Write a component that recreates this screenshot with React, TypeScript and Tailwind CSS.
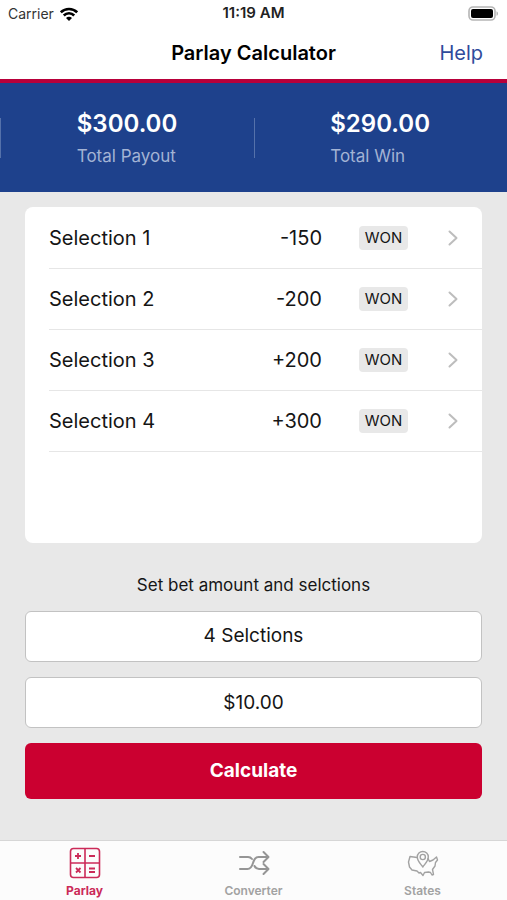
import { useState } from "react";
import type { ReactNode } from "react";

type Selection = {
  name: string;
  odds: string;
  result: string;
};

const selections: Selection[] = [
  { name: "Selection 1", odds: "-150", result: "WON" },
  { name: "Selection 2", odds: "-200", result: "WON" },
  { name: "Selection 3", odds: "+200", result: "WON" },
  { name: "Selection 4", odds: "+300", result: "WON" },
];

export default function App() {
  const [count, setCount] = useState("4");
  const [bet, setBet] = useState("$10.00");

  return (
    <div className="flex min-h-screen flex-col bg-[#e8e8e8] font-['Inter',sans-serif] text-[#151515]">
      <StatusBar />
      <header className="box-content grid h-13 grid-cols-[1fr_auto_1fr] items-center border-b-4 border-[#b8003a] bg-white">
        <h1 className="col-start-2 text-xl font-semibold text-black">Parlay Calculator</h1>
        <a href="#help" className="justify-self-end pr-6 text-xl text-[#2f4b9c]">
          Help
        </a>
      </header>

      <section className="flex h-[109px] items-center bg-[#1e418c]">
        <Stat value="$300.00" label="Total Payout" />
        <Stat value="$290.00" label="Total Win" />
      </section>

      <main className="flex flex-1 flex-col px-[25px] pt-[15px]">
        <ul className="min-h-[336px] overflow-hidden rounded-lg bg-white pt-px">
          {selections.map((selection) => (
            <SelectionRow key={selection.name} selection={selection} />
          ))}
        </ul>

        <form onSubmit={(event) => event.preventDefault()}>
          <p className="mt-7 text-center text-[17px] leading-7">Set bet amount and selctions</p>
          <select
            aria-label="Number of selections"
            value={count}
            onChange={(event) => setCount(event.target.value)}
            className="mt-3 block h-[51px] w-full appearance-none rounded-md border border-[#c2c2c2] bg-white text-[19px] [text-align-last:center]"
          >
            <option value="2">2 Selctions</option>
            <option value="3">3 Selctions</option>
            <option value="4">4 Selctions</option>
          </select>
          <input
            type="text"
            aria-label="Bet amount"
            value={bet}
            onChange={(event) => setBet(event.target.value)}
            className="mt-[15px] block h-[51px] w-full rounded-md border border-[#c2c2c2] bg-white text-center text-[19px]"
          />
          <button
            type="submit"
            className="mt-[15px] block h-14 w-full rounded-md bg-[#cb0030] text-[19px] font-bold text-white"
          >
            Calculate
          </button>
        </form>
      </main>

      <nav className="grid h-[60px] grid-cols-3 border-t border-[#d6d6d6] bg-[#fcfcfc]">
        <Tab label="Parlay" icon={<ParlayIcon />} active />
        <Tab label="Converter" icon={<ConverterIcon />} />
        <Tab label="States" icon={<StatesIcon />} />
      </nav>
    </div>
  );
}

function StatusBar() {
  return (
    <div className="grid h-[27px] grid-cols-[1fr_auto_1fr] items-center bg-white px-2">
      <div className="flex items-center gap-1.5 text-sm text-[#333]">
        <span>Carrier</span>
        <svg viewBox="0 0 18 14" className="h-3.5 w-[18px]" fill="none" stroke="#000" strokeWidth="2.6">
          <path d="M.8 5.400a11.500 11.500 0 0 1 16.400 0" />
          <path d="M3.800 8.500a7.300 7.300 0 0 1 10.400 0" />
          <path d="M9 14 6 11a4.200 4.200 0 0 1 6 0Z" fill="#000" stroke="none" />
        </svg>
      </div>
      <span className="text-[15px] font-semibold text-[#222]">11:19 AM</span>
      <svg viewBox="0 0 31 15" className="h-[15px] w-[31px] justify-self-end">
        <rect x="1" y="1" width="26" height="13" rx="4" fill="#fff" stroke="#b5b5b5" strokeWidth="1.6" />
        <rect x="3" y="3" width="22" height="9" rx="2" fill="#000" />
        <path d="M28.5 5.2c2 .8 2 3.8 0 4.6Z" fill="#b5b5b5" />
      </svg>
    </div>
  );
}

function Stat({ value, label }: { value: string; label: string }) {
  return (
    <div className="flex flex-1 basis-0 items-center">
      <span className="h-10 w-px bg-[#5571aa]" />
      <div className="flex-1 pt-1">
        <div className="mx-auto w-[101px] whitespace-nowrap">
          <p className="text-2xl leading-8 font-semibold text-white">{value}</p>
          <p className="text-[17px] leading-8 text-[#a3b3d4]">{label}</p>
        </div>
      </div>
    </div>
  );
}

function SelectionRow({ selection }: { selection: Selection }) {
  return (
    <li className="ml-6 border-b border-[#e6e6e6]">
      <button type="button" className="flex h-15 w-full items-center pr-6 text-left">
        <span className="flex-1 text-xl">{selection.name}</span>
        <span className="text-xl">{selection.odds}</span>
        <span className="ml-[37px] w-[49px] rounded-sm bg-[#e8e8e8] text-center text-[15px] leading-6">
          {selection.result}
        </span>
        <svg
          viewBox="0 0 10 16"
          className="ml-10 h-4 w-2.5"
          fill="none"
          stroke="#bdbdbd"
          strokeWidth="2"
          strokeLinecap="round"
          strokeLinejoin="round"
        >
          <path d="m1.5 1.5 7 6.5-7 6.5" />
        </svg>
      </button>
    </li>
  );
}

type TabProps = {
  label: string;
  icon: ReactNode;
  active?: boolean;
};

function Tab({ label, icon, active = false }: TabProps) {
  return (
    <a
      href={`#${label.toLowerCase()}`}
      aria-current={active ? "page" : undefined}
      className={
        active
          ? "flex flex-col items-center gap-1 pt-1.5 text-xs font-bold text-[#cb2a58]"
          : "flex flex-col items-center gap-1 pt-1.5 text-xs font-semibold text-[#a2a2a2]"
      }
    >
      {icon}
      {label}
    </a>
  );
}

function ParlayIcon() {
  return (
    <svg viewBox="0 0 32 32" className="size-8" fill="none" stroke="currentColor" strokeWidth="1.6">
      <rect x="1.5" y="1.5" width="29" height="29" rx="3" />
      <path d="M16 1.5v29M1.5 16h29" />
      <path
        d="M9 6v6M6 9h6M20 9h6M7 21l4.500 4.500M11.500 21 7 25.500M20 21.500h6M20 25h6"
        strokeWidth="1.8"
      />
    </svg>
  );
}

function ConverterIcon() {
  return (
    <svg
      viewBox="0 0 32 32"
      className="size-8"
      fill="none"
      stroke="#959595"
      strokeWidth="2"
      strokeLinecap="round"
      strokeLinejoin="round"
    >
      <path d="M2 10h8q2.500 0 4 2" />
      <path d="M2 22h7.500C17 22 13 10 20.500 10H30" />
      <path d="M16.500 19q1.500 3 4.500 3h9" />
      <path d="m25.500 5 5 5-5 5M25.500 17l5 5-5 5" />
    </svg>
  );
}

function StatesIcon() {
  return (
    <svg
      viewBox="0 0 32 32"
      className="size-8"
      fill="none"
      stroke="currentColor"
      strokeWidth="1.4"
      strokeLinecap="round"
      strokeLinejoin="round"
    >
      <path d="M10 10.500 3 9.500 1.500 15l1 5 2.500 3 5 1 2 2 1.500-.5 2.500 3 1.500-3 4-.5 2 .5 1.500 2.500 1.500-.500-1-5 2.500-3.500.500-3.500 2-2.500-1-3-3.500 3-3.500 1.500-1.500-3" />
      <path d="M15.800 20c-2.500-3.500-5.500-6-5.500-10a5.500 5.500 0 0 1 11 0c0 4-3 6.500-5.500 10Z" />
      <circle cx="15.800" cy="10" r="2.600" />
    </svg>
  );
}
